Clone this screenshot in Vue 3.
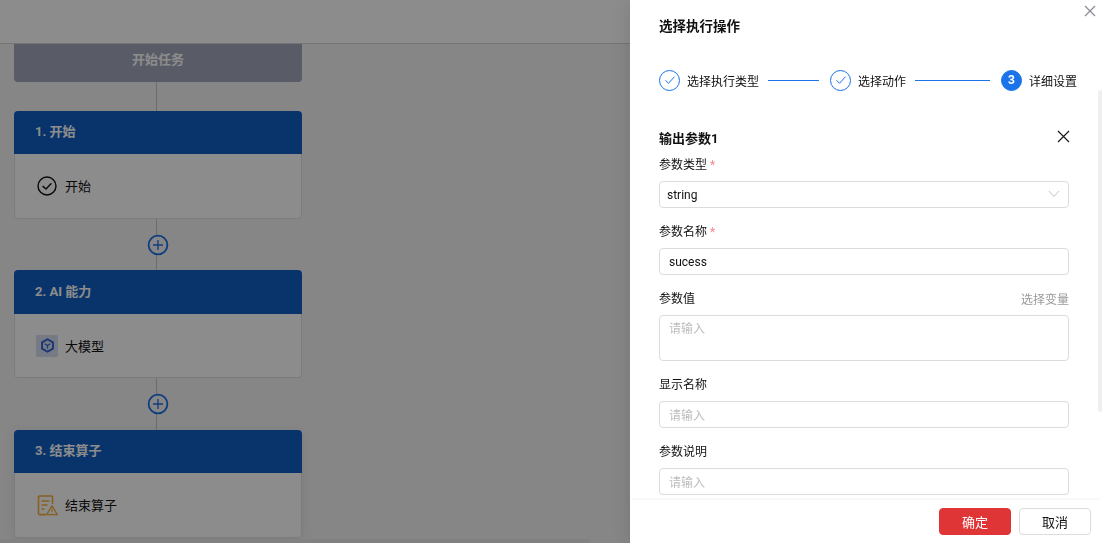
<script setup>
const steps = [
  { label: '选择执行类型', done: true, line: 51 },
  { label: '选择动作', done: true, line: 75 },
  { label: '详细设置', done: false, num: 3 },
]
const nodes = [
  { title: '1. 开始', text: '开始', icon: 'check', headH: 43, tall: false },
  { title: '2. AI 能力', text: '大模型', icon: 'cube', headH: 44, tall: true },
  { title: '3. 结束算子', text: '结束算子', icon: 'end', headH: 43, tall: false },
]
</script>

<template>
  <div class="page">
    <header class="top"></header>
    <main class="canvas">
      <div class="flow">
        <div class="start"><span>开始任务</span></div>
        <div class="line first"></div>
        <template v-for="(n, i) in nodes" :key="n.title">
          <section class="node">
            <div class="node-head" :style="{ height: n.headH + 'px' }">{{ n.title }}</div>
            <div class="node-body">
              <svg v-if="n.icon === 'check'" class="ic" viewBox="0 0 20 20" width="20" height="20" fill="none" stroke="#111" stroke-width="1.4">
                <circle cx="10" cy="10" r="9" />
                <path d="M6 10.4l3 2.6 5-5.2" stroke-linecap="round" stroke-linejoin="round" />
              </svg>
              <span v-else-if="n.icon === 'cube'" class="cube">
                <svg viewBox="0 0 16 16" width="15" height="15" fill="none" stroke="#2f62d8" stroke-width="2" stroke-linejoin="round">
                  <path d="M8 1.3l5.8 3.3v6.8L8 14.7l-5.8-3.3V4.6z" />
                  <path d="M5 6.2L8 8l3-1.8M8 8v3.3" stroke-width="1.3" />
                </svg>
              </span>
              <svg v-else class="ic end" viewBox="0 0 21 21" width="21" height="21" fill="none" stroke="#f5ae3c" stroke-width="1.5">
                <path d="M9 19.6H2.5a1 1 0 0 1-1-1V2a1 1 0 0 1 1-1h12a1 1 0 0 1 1 1v7" stroke-width="1.6" />
                <path d="M4.5 6h8M4.5 10h6M4.5 14h3" stroke-width="1.6" />
                <path d="M15 10.8l5.3 8.8H9.7z" stroke-linejoin="round" stroke-width="1.3" />
                <path d="M15 14v3M15 17.8v.7" stroke-width="1" />
              </svg>
              <span class="node-text">{{ n.text }}</span>
            </div>
          </section>
          <div v-if="i < 2" class="link" :class="{ tall: n.tall }">
            <span class="plus">
              <svg viewBox="0 0 22 22" width="22" height="22" fill="none" stroke="#1a6fe6">
                <circle cx="11" cy="11" r="9.4" stroke-width="1.8" fill="#f4f4f4" />
                <path d="M6 11h10M11 6v10" stroke-width="1.3" />
              </svg>
            </span>
          </div>
        </template>
      </div>
      <span class="hbar"></span>
    </main>
  </div>

  <div class="mask"></div>

  <aside class="drawer">
    <button class="drawer-close" aria-label="关闭">
      <svg viewBox="0 0 12 12" width="12" height="12" fill="none" stroke="#8a8a94" stroke-width="1.2"><path d="M1 1l10 10M11 1L1 11" /></svg>
    </button>
    <h2 class="title">选择执行操作</h2>
    <div class="steps">
      <template v-for="s in steps" :key="s.label">
        <span class="dot" :class="{ active: !s.done }">
          <svg v-if="s.done" viewBox="0 0 12 12" width="12" height="12" fill="none" stroke="#1a73e8" stroke-width="1"><path d="M1.5 6.3l3 3 6-6.6" /></svg>
          <template v-else>{{ s.num }}</template>
        </span>
        <span class="step-label">{{ s.label }}</span>
        <span v-if="s.line" class="step-line" :style="{ width: s.line + 'px' }"></span>
      </template>
    </div>

    <div class="body">
      <div class="sec-head">
        <h3>输出参数1</h3>
        <svg viewBox="0 0 13 13" width="13" height="13" fill="none" stroke="#1a1a1a" stroke-width="1.2"><path d="M1 1l11 11M12 1L1 12" /></svg>
      </div>

      <label class="lab">参数类型<i>*</i></label>
      <div class="box select">
        <span>string</span>
        <svg viewBox="0 0 12 8" width="12" height="8" fill="none" stroke="#c4c4c4" stroke-width="1"><path d="M1 1l5 5.5L11 1" /></svg>
      </div>

      <label class="lab">参数名称<i>*</i></label>
      <div class="box value">sucess</div>

      <div class="lab between"><span>参数值</span><a>选择变量</a></div>
      <div class="box area ph">请输入</div>

      <label class="lab">显示名称</label>
      <div class="box ph">请输入</div>

      <label class="lab">参数说明</label>
      <div class="box ph">请输入</div>
    </div>

    <footer class="foot">
      <button class="btn primary">确定</button>
      <button class="btn">取消</button>
    </footer>
    <span class="thumb"></span>
  </aside>
</template>

<style>
html, body { margin: 0; height: 100%; overflow: hidden; background: #fff; }
</style>

<style scoped>
* { box-sizing: border-box; }
.page, .drawer { font-family: Roboto, "Noto Sans CJK SC", sans-serif; }
.page { height: 543px; overflow: hidden; background: #fff; color: #222; display: flex; flex-direction: column; }
.top { height: 44px; flex: none; border-bottom: 1px solid #d4d4d4; background: #fff; position: relative; z-index: 1; }
.canvas { flex: 1; background: #f4f4f4; overflow: hidden; position: relative; }
.flow { width: 288px; margin-left: 14px; display: flex; flex-direction: column; }
.start { height: 38px; background: #a2a7bc; color: #fff; font-weight: 700; font-size: 13px; display: flex; justify-content: center; border-radius: 0 0 4px 4px; }
.start span { margin-top: 6px; line-height: 20px; }
.line.first { width: 1px; height: 29px; margin-left: 142px; background: #c4c4c4; }
.node { height: 108px; border-radius: 4px; background: #fff; display: flex; flex-direction: column; flex: none; }
.node-head { background: #115fc4; color: #fff; font-size: 13px; font-weight: 700; display: flex; align-items: center; padding: 0 0 4px 21px; border-radius: 4px 4px 0 0; flex: none; }
.node-body { flex: 1; border: 1px solid #e2e2e2; border-top: 0; border-radius: 0 0 4px 4px; display: flex; align-items: center; gap: 8px; padding: 0 0 0 22px; font-size: 13px; color: #111; }
.node-text { margin-top: -2px; }
.cube + .node-text { margin-top: 0; }
.node:last-child { box-shadow: 0 2px 12px rgba(0,0,0,.08); }
.ic { flex: none; }
.ic.end { margin-right: -1px; }
.cube { width: 22px; height: 22px; margin: 0 -1px 0 -1px; border-radius: 2px; background: #d5dff0; display: flex; align-items: center; justify-content: center; flex: none; }
.link { height: 51px; position: relative; flex: none; }
.link.tall { height: 52px; }
.link::before { content: ""; position: absolute; left: 142px; top: 0; bottom: 0; width: 1px; background: #c4c4c4; }
.plus { position: absolute; left: 133px; top: 15px; width: 22px; height: 22px; display: block; }
.hbar { position: absolute; left: 0; bottom: 0; width: 590px; height: 4px; background: #ebebeb; }

.mask { position: fixed; inset: 0; z-index: 2; background: rgba(0,0,0,.45); }
.drawer { position: fixed; right: 0; top: 0; bottom: 0; z-index: 3; width: 472px; background: #fff; display: flex; flex-direction: column; color: #111; box-shadow: -6px 0 16px rgba(0,0,0,.08); }
.drawer-close { position: absolute; right: 6px; top: 5px; border: 0; padding: 0; background: none; display: flex; }
.title { margin: 16px 0 0 29px; font-size: 13.5px; line-height: 20px; font-weight: 700; }
.steps { display: flex; align-items: center; margin: 33px 0 0 29px; height: 22px; font-size: 12px; }
.dot { width: 21px; height: 21px; flex: none; border-radius: 50%; border: 1px solid #1a73e8; display: flex; align-items: center; justify-content: center; font-size: 12px; font-weight: 700; }
.dot.active { background: #1a73e8; color: #fff; }
.step-label { margin-left: 7px; white-space: nowrap; }
.step-line { height: 1px; background: #1a73e8; margin: 0 11px 0 9px; flex: none; }
.body { flex: 1; min-height: 0; overflow: hidden; padding: 0 33px 0 29px; margin-top: 38px; }
.sec-head { display: flex; align-items: center; justify-content: space-between; height: 20px; margin-bottom: 6px; }
.sec-head h3 { margin: 0; font-size: 13px; font-weight: 700; line-height: 20px; }
.sec-head svg { margin-right: -1px; margin-top: -6px; }
.lab { display: flex; font-size: 12px; line-height: 20px; height: 20px; margin-bottom: 6px; color: #111; }
.lab i { color: #f78a8a; font-style: normal; margin-left: 3px; }
.between { justify-content: space-between; }
.between a { color: #9a9a9a; margin-top: 1px; }
.box { height: 27px; border: 1px solid #dcdcdc; border-radius: 4px; font-size: 12px; line-height: 25px; padding: 0 9px; margin-bottom: 14px; background: #fff; color: #111; }
.select { display: flex; align-items: center; justify-content: space-between; padding: 0 8px 0 7px; }
.select span { margin-top: 2px; }
.select svg { margin-top: -2px; }
.value { line-height: 26px; }
.area { height: 46px; }
.ph { color: #bdbdbd; line-height: 28px; }
.area.ph { line-height: 26px; }
.foot { height: 43px; flex: none; background: #fff; display: flex; align-items: center; justify-content: flex-end; gap: 8px; padding: 0 11px 0 0; box-shadow: 0 -1px 3px rgba(0,0,0,.05); position: relative; }
.btn { width: 72px; height: 27px; border: 1px solid #dcdcdc; border-radius: 4px; background: #fff; font: 13px Roboto, "Noto Sans CJK SC", sans-serif; color: #111; padding: 0; }
.btn.primary { background: #e03537; border-color: #e03537; color: #fff; }
.thumb { position: absolute; right: 0; top: 90px; width: 4px; height: 322px; background: #efefef; border-radius: 3px 0 0 3px; }
</style>
